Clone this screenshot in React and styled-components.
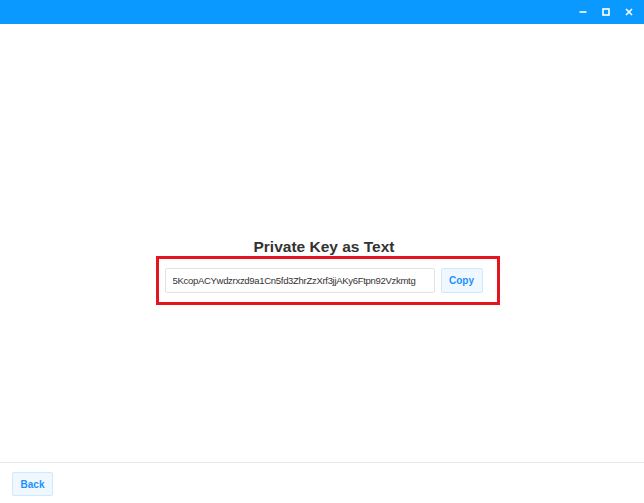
import styled, { createGlobalStyle } from 'styled-components'

const Global = createGlobalStyle`
  html, body { margin: 0; padding: 0; background: #fff; }
  body { font-family: "Liberation Sans", Arial, sans-serif; }
  * { box-sizing: border-box; }
`

const Window = styled.div`
  width: 644px;
  height: 503px;
  display: flex;
  flex-direction: column;
`

const TitleBar = styled.div`
  height: 24px;
  background: #0a99ff;
  display: flex;
  justify-content: flex-end;
  align-items: center;
  padding-right: 7px;
  gap: 6px;
`

const WinBtn = styled.button`
  width: 17px;
  height: 17px;
  border: none;
  background: transparent;
  padding: 0;
  display: flex;
  align-items: center;
  justify-content: center;
  color: #fff;
`

const Main = styled.main`
  flex: 1;
  display: flex;
  flex-direction: column;
  align-items: center;
  padding-top: 213px;
`

const Title = styled.h2`
  margin: 0 0 0 4px;
  font-size: 15.5px;
  font-weight: bold;
  color: #333;
  line-height: 19px;
`

const KeyRow = styled.div`
  width: 344px;
  height: 49px;
  margin-left: 11px;
  border: 3px solid #e5141f;
  display: flex;
  align-items: flex-start;
  gap: 6px;
  padding: 9px 0 0 6px;
`

const KeyInput = styled.input`
  width: 270px;
  height: 25px;
  border: 1px solid #e3e3e3;
  border-radius: 2px;
  padding: 0 7px;
  font-family: "Liberation Sans", Arial, sans-serif;
  font-size: 9.5px;
  letter-spacing: -0.3px;
  color: #333;
  outline: none;
`

const LightButton = styled.button`
  height: ${p => p.$h || 25}px;
  width: ${p => p.$w || 42}px;
  background: #f0f8ff;
  border: 1px solid #cde8ff;
  border-radius: 2px;
  color: #1e90ff;
  font-family: "Liberation Sans", Arial, sans-serif;
  font-size: 10px;
  font-weight: ${p => p.$bold ? 'bold' : 'normal'};
  padding: 0;
  cursor: pointer;
`

const Footer = styled.footer`
  height: 41px;
  border-top: 1px solid #e6e6e6;
  padding: 9px 12px 0;
`

export default function App() {
  return (
    <Window>
      <Global />
      <TitleBar>
        <WinBtn aria-label="minimize">
          <svg width="10" height="10" viewBox="0 0 10 10"><path d="M1.5 5h7" stroke="#fff" strokeWidth="1.6" /></svg>
        </WinBtn>
        <WinBtn aria-label="maximize">
          <svg width="10" height="10" viewBox="0 0 10 10"><rect x="2" y="2" width="6" height="6" fill="none" stroke="#fff" strokeWidth="1.6" /></svg>
        </WinBtn>
        <WinBtn aria-label="close">
          <svg width="10" height="10" viewBox="0 0 10 10"><path d="M2 2l6 6M8 2l-6 6" stroke="#fff" strokeWidth="1.6" /></svg>
        </WinBtn>
      </TitleBar>
      <Main>
        <Title>Private Key as Text</Title>
        <KeyRow>
          <KeyInput readOnly value="5KcopACYwdzrxzd9a1Cn5fd3ZhrZzXrf3jjAKy6Ftpn92Vzkmtg" />
          <LightButton $bold>Copy</LightButton>
        </KeyRow>
      </Main>
      <Footer>
        <LightButton $w={41} $h={24} $bold>Back</LightButton>
      </Footer>
    </Window>
  )
}
